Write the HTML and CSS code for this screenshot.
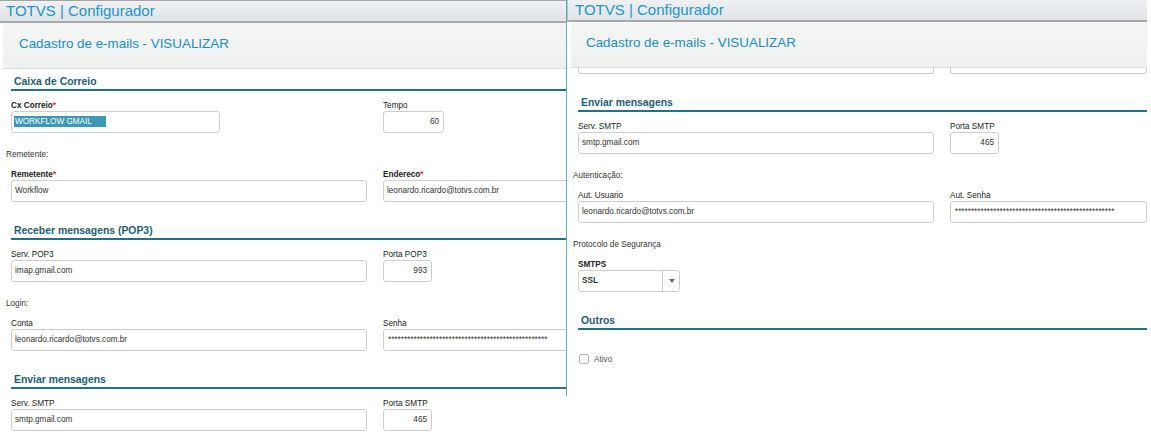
FILE: index.html
```html
<!DOCTYPE html>
<html lang="pt-BR">
<head>
<meta charset="utf-8">
<title>TOTVS | Configurador</title>
<link rel="stylesheet" href="styles.css">
</head>
<body>
<div class="screen">
  <div class="panel panel-left">
    <div class="appbar">TOTVS | Configurador</div>
    <div class="titlebar">Cadastro de e-mails - VISUALIZAR</div>
    <div class="form">
      <div class="section first">Caixa de Correio</div>
      <div class="row">
        <div class="field">
          <div class="lbl req">Cx Correio<span class="req-mark">*</span></div>
          <div class="input w-cx"><span class="sel">WORKFLOW GMAIL</span></div>
        </div>
        <div class="field">
          <div class="lbl">Tempo</div>
          <div class="input num w-tempo">60</div>
        </div>
      </div>
      <div class="group">Remetente:</div>
      <div class="row">
        <div class="field">
          <div class="lbl req">Remetente<span class="req-mark">*</span></div>
          <div class="input">Workflow</div>
        </div>
        <div class="field">
          <div class="lbl req">Endereco<span class="req-mark">*</span></div>
          <div class="input">leonardo.ricardo@totvs.com.br</div>
        </div>
      </div>
      <div class="section">Receber mensagens (POP3)</div>
      <div class="row">
        <div class="field">
          <div class="lbl">Serv. POP3</div>
          <div class="input">imap.gmail.com</div>
        </div>
        <div class="field">
          <div class="lbl">Porta POP3</div>
          <div class="input num w-porta">993</div>
        </div>
      </div>
      <div class="group">Login:</div>
      <div class="row">
        <div class="field">
          <div class="lbl">Conta</div>
          <div class="input">leonardo.ricardo@totvs.com.br</div>
        </div>
        <div class="field">
          <div class="lbl">Senha</div>
          <div class="input pwd">**************************************************</div>
        </div>
      </div>
      <div class="section">Enviar mensagens</div>
      <div class="row">
        <div class="field">
          <div class="lbl">Serv. SMTP</div>
          <div class="input">smtp.gmail.com</div>
        </div>
        <div class="field">
          <div class="lbl">Porta SMTP</div>
          <div class="input num w-porta">465</div>
        </div>
      </div>
    </div>
  </div>

  <div class="panel panel-right">
    <div class="appbar">TOTVS | Configurador</div>
    <div class="titlebar">Cadastro de e-mails - VISUALIZAR</div>
    <div class="form">
      <div class="tails"><div class="tail"></div><div class="tail"></div></div>
      <div class="section">Enviar mensagens</div>
      <div class="row">
        <div class="field">
          <div class="lbl">Serv. SMTP</div>
          <div class="input">smtp.gmail.com</div>
        </div>
        <div class="field">
          <div class="lbl">Porta SMTP</div>
          <div class="input num w-porta">465</div>
        </div>
      </div>
      <div class="group">Autenticação:</div>
      <div class="row">
        <div class="field">
          <div class="lbl">Aut. Usuario</div>
          <div class="input">leonardo.ricardo@totvs.com.br</div>
        </div>
        <div class="field">
          <div class="lbl">Aut. Senha</div>
          <div class="input pwd">**************************************************</div>
        </div>
      </div>
      <div class="group">Protocolo de Segurança</div>
      <div class="row">
        <div class="field">
          <div class="lbl req">SMTPS</div>
          <div class="select">
            <div class="select-value">SSL</div>
            <div class="select-arrow"><svg width="6" height="4" viewBox="0 0 6 4"><path d="M0 0H6L3 4Z" fill="#6a6a6a"/></svg></div>
          </div>
        </div>
      </div>
      <div class="section">Outros</div>
      <div class="check-row">
        <span class="checkbox"></span>
        <span class="check-label">Ativo</span>
      </div>
    </div>
  </div>
</div>
</body>
</html>
```
FILE: styles.css
```css
* { box-sizing: border-box; }
html, body { margin: 0; padding: 0; background: #fff; }
body {
  font-family: "Liberation Sans", Arial, sans-serif;
  width: 1151px;
  height: 443px;
  overflow: hidden;
}
.screen { display: flex; align-items: flex-start; }
.panel { overflow: hidden; background: #fff; }
.panel-left { width: 566px; height: 443px; }
.panel-right { width: 581px; height: 396px; border-left: 1px solid #62abc0; }

.appbar {
  height: 23px;
  border-top: 1px solid #a3a3a3;
  border-bottom: 2px solid #a9a9a9;
  background: linear-gradient(#eef0f2, #e1e4e7);
  color: #2196c8;
  font-size: 15px;
  line-height: 20px;
  padding-left: 6px;
  white-space: nowrap;
}
.panel-right .appbar {
  height: 22px;
  border-top: 0;
  border-left: 1px solid #b8bcc0;
  padding-left: 7px;
}

.titlebar {
  margin-left: 3px;
  height: 46px;
  padding: 13px 0 0 16px;
  border-bottom: 1px solid #dadada;
  background: linear-gradient(#f4f5f5, #eff0f0);
  color: #1b8fc0;
  font-size: 13.4px;
  line-height: 16px;
  white-space: nowrap;
}
.panel-right .titlebar { margin-left: 4px; padding-left: 15px; }

.form { width: 580px; }

.section {
  margin: 22px 0 0 11px;
  padding: 0 0 1px 3px;
  border-bottom: 2px solid #23708a;
  color: #1d5d72;
  font-size: 10.4px;
  font-weight: bold;
  line-height: 13px;
  white-space: nowrap;
}
.section.first { margin-top: 6px; }

.row {
  display: grid;
  grid-template-columns: 356px 1fr;
  column-gap: 16px;
  margin: 10px 0 0 11px;
}

.lbl {
  font-size: 8.2px;
  line-height: 10px;
  color: #222;
  white-space: nowrap;
}
.lbl.req { font-weight: bold; }
.req-mark { color: #e3262b; }

.group {
  margin: 17px 0 0 6px;
  font-size: 8.2px;
  line-height: 10px;
  color: #333;
  white-space: nowrap;
}

.input {
  height: 22px;
  border: 1px solid #cdcdcd;
  border-radius: 3px;
  padding: 0 3px;
  background: #fff;
  font-size: 8.2px;
  line-height: 20px;
  color: #333;
  white-space: nowrap;
  overflow: hidden;
}
.input.num { text-align: right; padding-right: 4px; }
.input.pwd { padding-left: 4px; }
.w-cx { width: 209px; }
.w-tempo { width: 61px; }
.w-porta { width: 49px; }

.sel {
  display: inline-block;
  margin-left: -1px;
  padding: 0 14px 0 1px;
  background: #3b99b4;
  color: #fff;
  line-height: 11px;
  vertical-align: middle;
}

.tails {
  display: grid;
  grid-template-columns: 356px 1fr;
  column-gap: 16px;
  margin-left: 11px;
}
.tail {
  height: 6px;
  border: 1px solid #cdcdcd;
  border-top: 0;
  border-radius: 0 0 3px 3px;
}

.select {
  display: flex;
  width: 102px;
  height: 22px;
  border: 1px solid #cdcdcd;
  border-radius: 3px;
  font-size: 8.2px;
  font-weight: bold;
  color: #333;
}
.select-value {
  flex: 1;
  padding-left: 3px;
  line-height: 20px;
  border-right: 1px solid #cdcdcd;
}
.select-arrow {
  width: 16px;
  display: flex;
  align-items: center;
  justify-content: center;
  padding-left: 2px;
}
.select-arrow svg { display: block; }

.check-row {
  display: flex;
  align-items: center;
  gap: 5px;
  margin: 22px 0 0 12px;
  height: 14px;
  font-size: 8.2px;
  color: #555;
}
.checkbox {
  width: 10px;
  height: 10px;
  border: 1px solid #b5b5b5;
  border-radius: 2px;
  background: #fff;
}
```
